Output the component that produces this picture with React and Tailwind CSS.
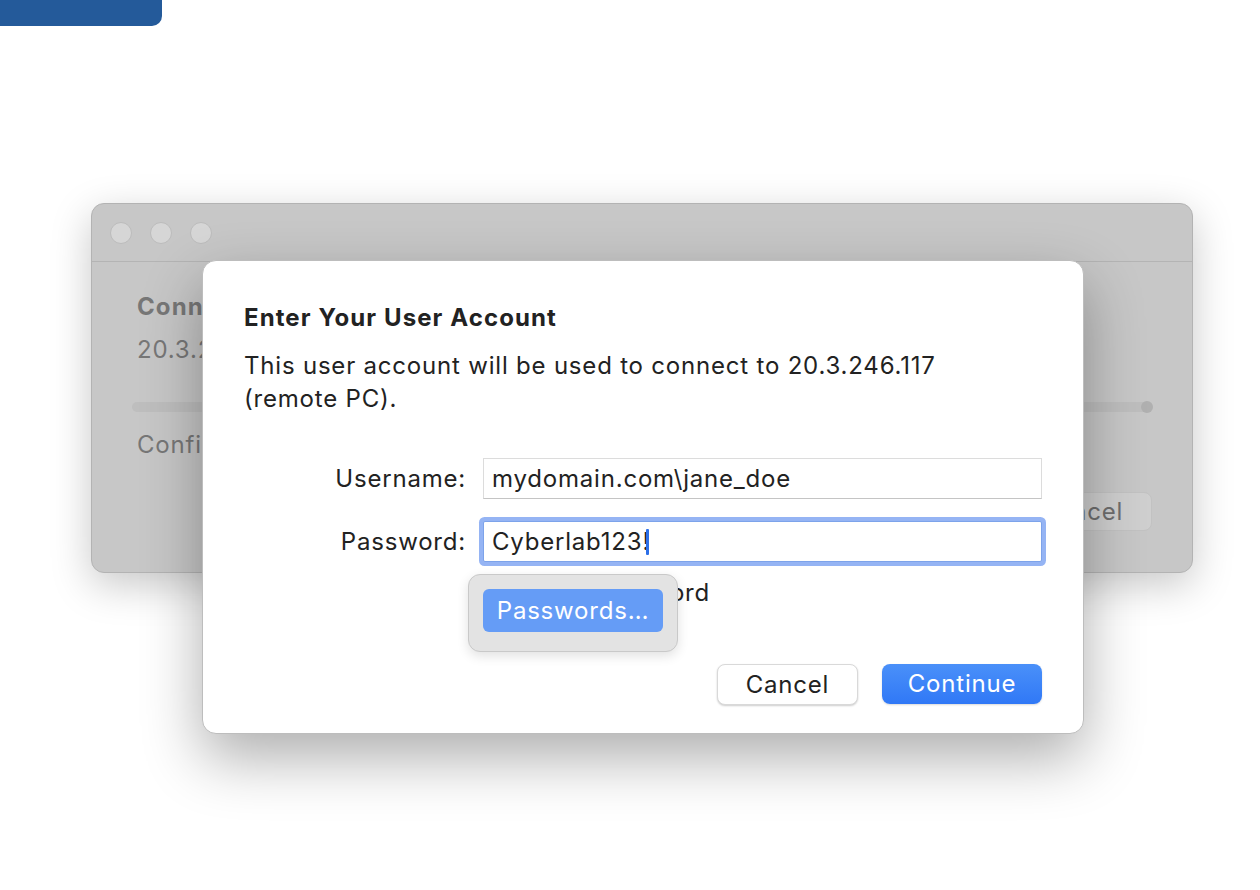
import React from "react";

export default function App() {
  return (
    <div
      className="relative w-[1260px] h-[890px] bg-white overflow-hidden"
      style={{ fontFamily: "Inter, 'Noto Sans', sans-serif" }}
    >
      <div className="w-[162px] h-[26px] bg-[#245a9a] rounded-br-[10px]" />
      <div className="pl-[91px] pt-[177px]">
        {/* background window */}
        <div className="relative w-[1102px] h-[370px] rounded-[13px] bg-[#c7c7c7] border border-[#b3b3b3] shadow-[0_12px_40px_rgba(0,0,0,0.22)]">
          <div className="h-[58px] border-b border-[#b4b4b4] flex items-center gap-[18px] pl-[18px]">
            <div className="w-[22px] h-[22px] rounded-full bg-[#d6d6d6] border border-[#bcbcbc]" />
            <div className="w-[22px] h-[22px] rounded-full bg-[#d6d6d6] border border-[#bcbcbc]" />
            <div className="w-[22px] h-[22px] rounded-full bg-[#d6d6d6] border border-[#bcbcbc]" />
          </div>
          <div className="px-[40px] pt-[28px] text-[24px] tracking-[0.8px] text-[#777777]">
            <div className="pl-[5px] font-bold leading-[33px] tracking-[1.1px]">Connecting to 20.3.246.117</div>
            <div className="pl-[5px] mt-[10px] leading-[33px]">20.3.246.117</div>
            <div className="relative mt-[36px] h-[10px] rounded-full bg-[#bebebe]">
              <div className="absolute right-[-1px] top-[-1px] w-[12px] h-[12px] rounded-full bg-[#b0b0b0]" />
            </div>
            <div className="pl-[5px] mt-[16px] leading-[33px]">Configuring remote PC...</div>
            <div className="flex justify-end mt-[31px]">
              <div className="w-[141px] h-[39px] rounded-[8px] bg-[#cfcfcf] border border-[#c2c2c2] flex items-center justify-center text-[#6e6e6e]">
                Cancel
              </div>
            </div>
          </div>

          {/* sheet */}
          <div className="absolute left-[110px] top-[56px] w-[882px] h-[474px] rounded-[14px] bg-white border border-[#bdbdbd] shadow-[0_24px_60px_rgba(0,0,0,0.32)] px-[41px] pt-[40px] text-[24px] tracking-[0.8px] text-[#222222]">
            <div className="font-bold leading-[33px] tracking-[1.1px]">Enter Your User Account</div>
            <div className="mt-[15px] leading-[33px]">
              This user account will be used to connect to 20.3.246.117
              <br />
              (remote PC).
            </div>
            <div className="mt-[43px] flex items-center">
              <div className="w-[239px] text-right pr-[17px]">Username:</div>
              <div className="flex-1 h-[41px] border border-[#dcdcdc] border-b-[#c4c4c4] flex items-center pl-[8px] bg-white">
                mydomain.com\jane_doe
              </div>
            </div>
            <div className="mt-[22px] flex items-center">
              <div className="w-[239px] text-right pr-[17px]">Password:</div>
              <div className="flex-1 h-[41px] border border-[#7da3ea] ring-[4px] ring-[#95b4f4] rounded-[2px] flex items-center pl-[8px] bg-white">
                <span>Cyberlab123!</span>
                <span className="w-[3px] h-[26px] bg-[#2c6fe8] ml-[-4px] rounded-[1px]" />
              </div>
            </div>
            <div className="mt-[14px] flex items-center pl-[239px] h-[34px]">
              <div className="w-[22px] h-[22px] rounded-[5px] border border-[#c7c7c7] bg-white mr-[14px]" />
              <span>Show password</span>
            </div>
            <div className="mt-[54px] flex justify-end gap-[24px]">
              <div className="w-[141px] h-[41px] rounded-[8px] bg-white border border-[#d9d9d9] shadow-[0_1px_2px_rgba(0,0,0,0.2)] flex items-center justify-center">
                Cancel
              </div>
              <div className="w-[160px] h-[40px] rounded-[8px] bg-gradient-to-b from-[#4a90f9] to-[#3078f6] flex items-center justify-center text-white shadow-[0_1px_2px_rgba(0,0,0,0.15)]">
                Continue
              </div>
            </div>

            {/* popup */}
            <div className="absolute left-[265px] top-[313px] w-[210px] h-[78px] rounded-[12px] bg-[#e3e3e3] border border-[#c9c9c9] shadow-[0_4px_12px_rgba(0,0,0,0.12)] p-[14px]">
              <div className="h-[43px] rounded-[6px] bg-[#659cf6] text-white flex items-center justify-center">
                Passwords…
              </div>
            </div>
          </div>
        </div>
      </div>
    </div>
  );
}
